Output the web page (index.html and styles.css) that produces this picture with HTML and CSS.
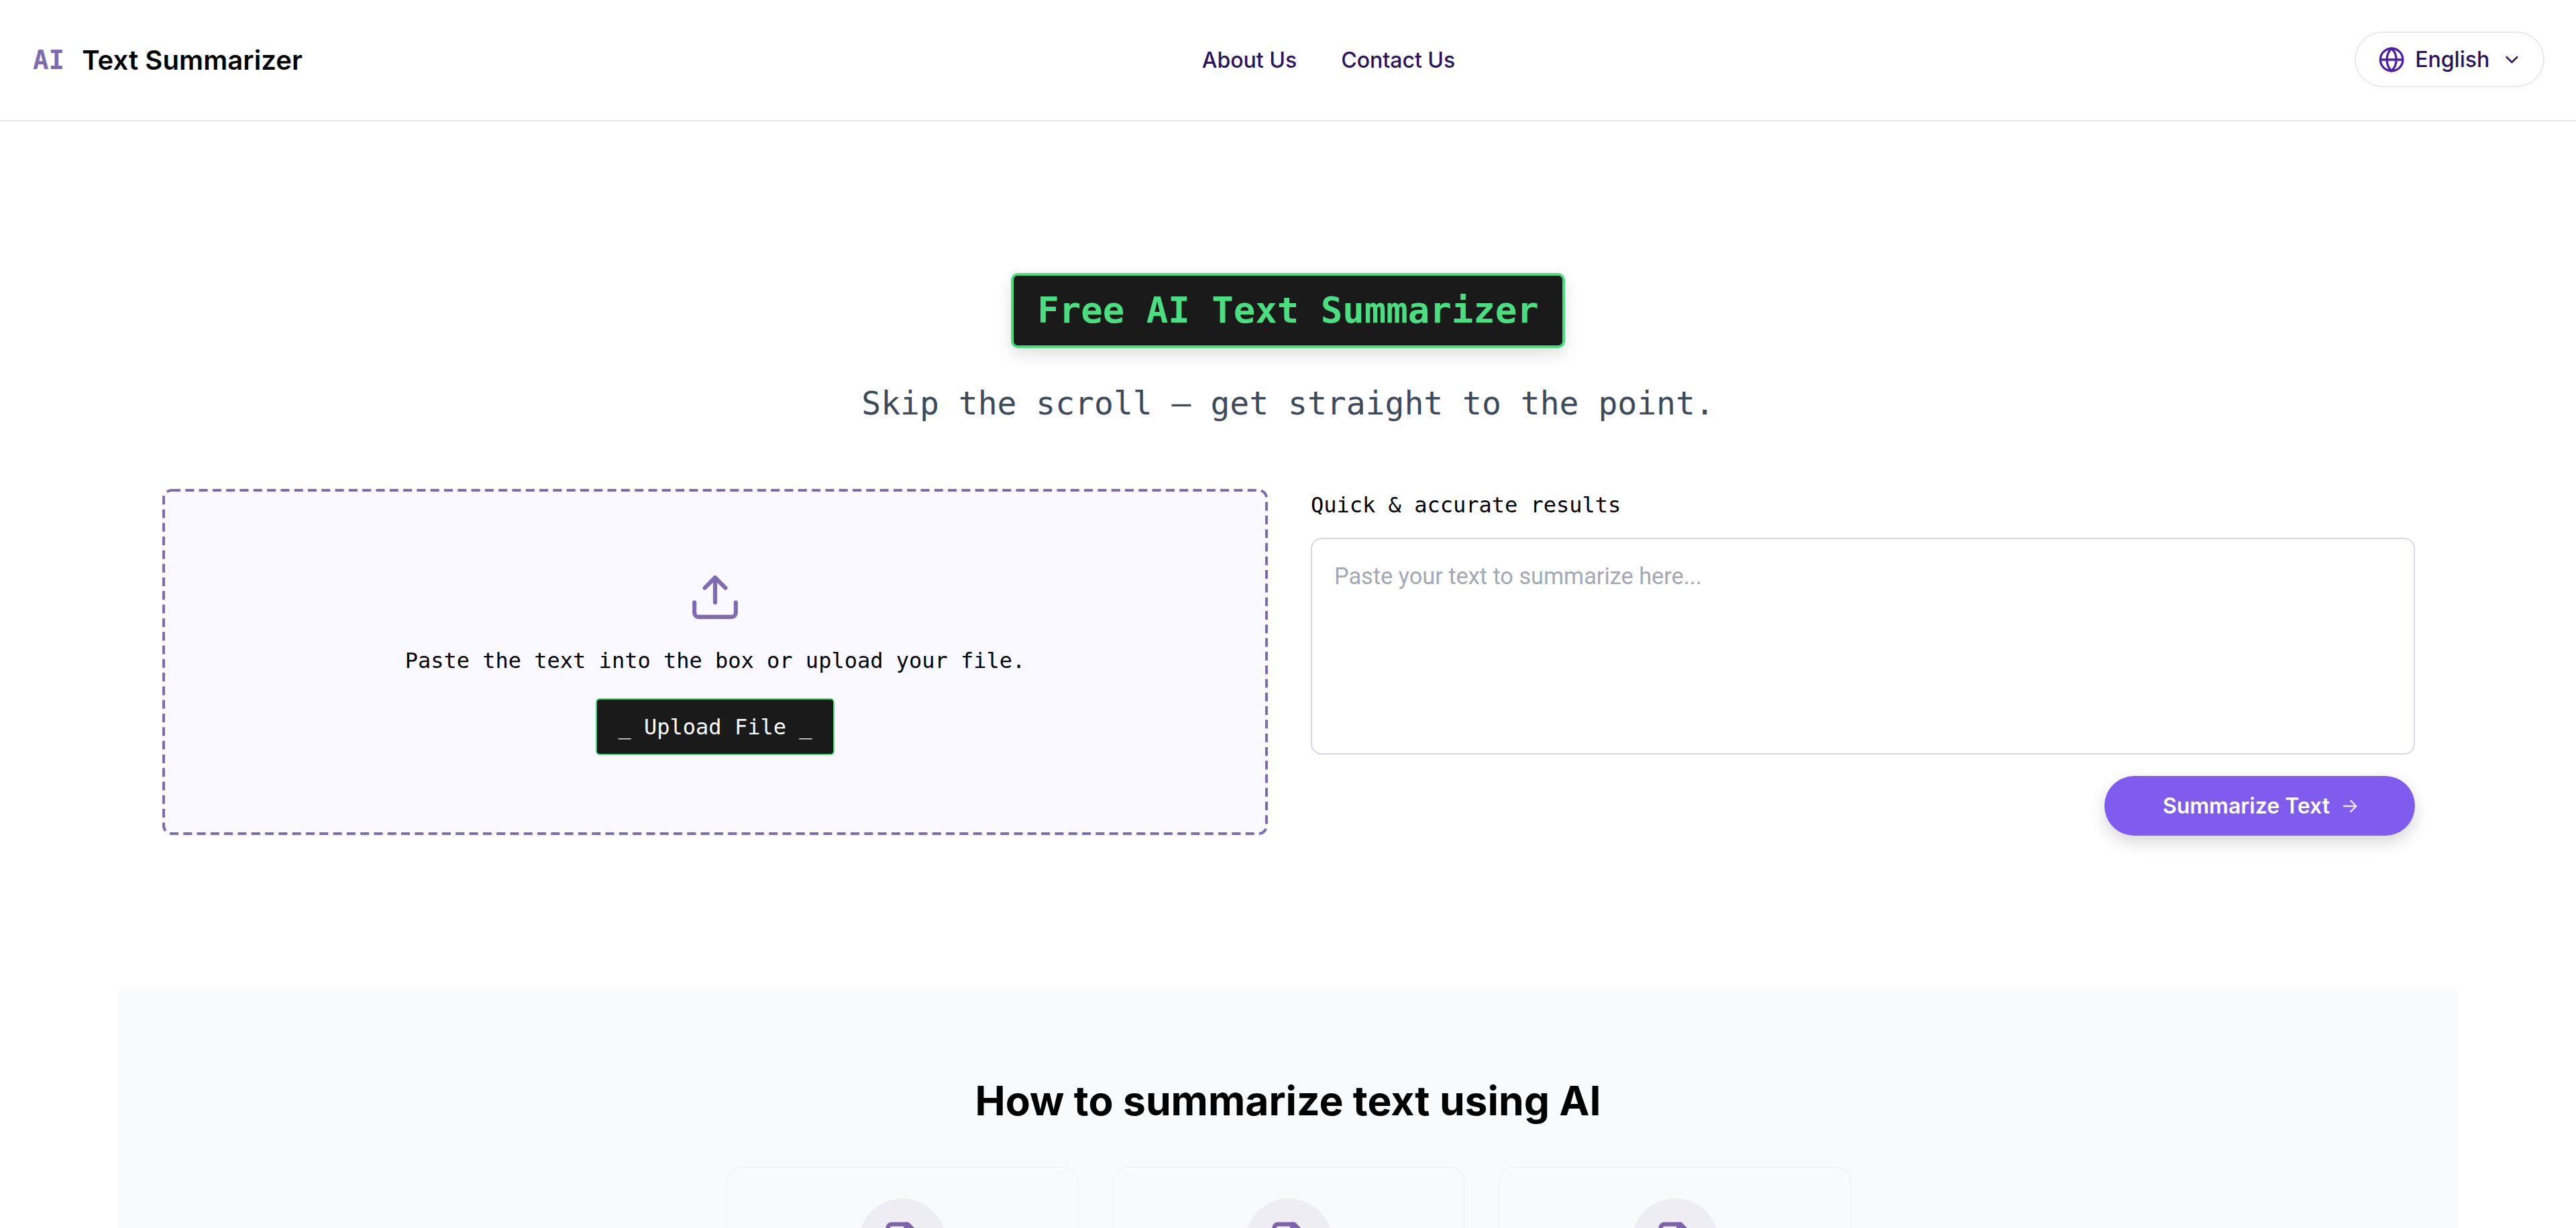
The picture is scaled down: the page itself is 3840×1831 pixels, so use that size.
FILE: index.html
```html
<!DOCTYPE html>
<html lang="en">
<head>
    <meta charset="UTF-8">
    <meta name="viewport" content="width=device-width, initial-scale=1.0">
    <title>AI Text Summarizer</title>
    <link rel="stylesheet" href="styles.css">
</head>
<body>

    <header class="site-header">
        <a class="logo" href="#"><span class="logo-mark">AI</span> <span>Text Summarizer</span></a>
        <nav class="main-nav">
            <a href="#">About Us</a>
            <a href="#">Contact Us</a>
        </nav>
        <button class="lang-select" type="button">
            <svg class="globe" viewBox="0 0 24 24" fill="none" stroke="currentColor" stroke-width="2">
                <circle cx="12" cy="12" r="10"/>
                <path d="M2 12h20"/>
                <path d="M12 2c2.8 2.7 4.2 6 4.2 10s-1.4 7.3-4.2 10c-2.800-2.700-4.200-6-4.200-10s1.400-7.300 4.200-10z"/>
            </svg>
            <span>English</span>
            <svg class="chevron" viewBox="0 0 24 24" fill="none" stroke="currentColor" stroke-width="2.4" stroke-linecap="round" stroke-linejoin="round">
                <path d="M5 8.500l7 7 7-7"/>
            </svg>
        </button>
    </header>

    <main>
        <section class="hero">
            <h1 class="hero-title">Free AI Text Summarizer</h1>
            <p class="hero-sub">Skip the scroll — get straight to the point.</p>

            <div class="tool-grid">
                <!-- Upload box -->
                <div class="drop-zone">
                    <svg class="drop-border" viewBox="0 0 1648 516" fill="none">
                        <rect x="2" y="2" width="1644" height="512" rx="12" stroke="#7f6bb0" stroke-width="4" stroke-dasharray="13 7.300"/>
                    </svg>
                    <svg class="upload-icon" viewBox="0 0 24 24" fill="none" stroke="currentColor" stroke-width="2" stroke-linecap="round" stroke-linejoin="round">
                        <path d="M12 15V3"/>
                        <path d="M7 8l5-5 5 5"/>
                        <path d="M2 15v5a2 2 0 0 0 2 2h16a2 2 0 0 0 2-2v-5"/>
                    </svg>
                    <p class="drop-text">Paste the text into the box or upload your file.</p>
                    <button class="upload-btn" type="button">_ Upload File _</button>
                </div>

                <!-- Text input -->
                <form class="text-form">
                    <label class="text-label" for="source-text">Quick &amp; accurate results</label>
                    <textarea id="source-text" class="text-input" placeholder="Paste your text to summarize here..."></textarea>
                    <button class="submit-btn" type="submit">
                        <span>Summarize Text</span>
                        <svg class="arrow" viewBox="0 0 24 24" fill="none" stroke="currentColor" stroke-width="2" stroke-linecap="round" stroke-linejoin="round">
                            <path d="M4 12h16"/>
                            <path d="M13 5l7 7-7 7"/>
                        </svg>
                    </button>
                </form>
            </div>
        </section>

        <section class="how-to">
            <h2>How to summarize text using AI</h2>
            <div class="steps">
                <div class="step-card">
                    <div class="step-icon">
                        <svg viewBox="0 0 24 24" fill="none" stroke="currentColor" stroke-width="2.400" stroke-linecap="round" stroke-linejoin="round">
                            <path d="M15 2H6a2 2 0 0 0-2 2v16a2 2 0 0 0 2 2h12a2 2 0 0 0 2-2V7z"/>
                            <path d="M14 2v4a2 2 0 0 0 2 2h4"/>
                        </svg>
                    </div>
                </div>
                <div class="step-card">
                    <div class="step-icon">
                        <svg viewBox="0 0 24 24" fill="none" stroke="currentColor" stroke-width="2.400" stroke-linecap="round" stroke-linejoin="round">
                            <path d="M15 2H6a2 2 0 0 0-2 2v16a2 2 0 0 0 2 2h12a2 2 0 0 0 2-2V7z"/>
                            <path d="M14 2v4a2 2 0 0 0 2 2h4"/>
                        </svg>
                    </div>
                </div>
                <div class="step-card">
                    <div class="step-icon">
                        <svg viewBox="0 0 24 24" fill="none" stroke="currentColor" stroke-width="2.400" stroke-linecap="round" stroke-linejoin="round">
                            <path d="M15 2H6a2 2 0 0 0-2 2v16a2 2 0 0 0 2 2h12a2 2 0 0 0 2-2V7z"/>
                            <path d="M14 2v4a2 2 0 0 0 2 2h4"/>
                        </svg>
                    </div>
                </div>
            </div>
        </section>
    </main>

</body>
</html>
```

FILE: styles.css
```css
/* General Styles */
* {
    box-sizing: border-box;
}

html,
body {
    height: 100%;
    overflow: hidden;
}

body {
    margin: 0;
    background: #fff;
    color: #000;
    font-family: Inter, sans-serif;
}

a {
    color: inherit;
    text-decoration: none;
}

/* Header */
.site-header {
    display: flex;
    justify-content: space-between;
    align-items: center;
    height: 181px;
    padding: 0 47px 0 49px;
    border-bottom: 2px solid #e9e8f0;
}

.logo {
    display: flex;
    align-items: center;
    gap: 26px;
    font-size: 40px;
    font-weight: 600;
    letter-spacing: 0.1px;
}

.logo-mark {
    color: #7f6bb0;
    font-family: "DejaVu Sans Mono", monospace;
    font-size: 39px;
    font-weight: 700;
}

.main-nav {
    display: flex;
    gap: 66px;
    color: #2a1260;
    font-size: 32px;
    font-weight: 500;
}

.lang-select {
    display: flex;
    align-items: center;
    width: 283px;
    height: 83px;
    margin-bottom: 2px;
    padding: 0 33px;
    border: 2px solid #e9e8f0;
    border-radius: 42px;
    background: #fff;
    color: #2a1260;
    font-family: inherit;
    font-size: 32px;
    font-weight: 500;
}

.globe {
    width: 42px;
    height: 42px;
    margin-right: 15px;
    color: #4c21a8;
}

.chevron {
    width: 28px;
    height: 28px;
    margin-left: 20px;
}

/* Hero */
.hero {
    display: flex;
    flex-direction: column;
    align-items: center;
    padding-top: 226px;
}

.hero-title {
    margin: 0;
    height: 112px;
    padding: 0 35px;
    border: 4px solid #4ade80;
    border-radius: 10px;
    background: #1a1a1a;
    box-shadow: 0 10px 24px rgba(0, 0, 0, 0.12);
    color: #4ade80;
    font-family: "DejaVu Sans Mono", monospace;
    font-size: 54px;
    font-weight: 700;
    line-height: 104px;
}

.hero-sub {
    margin: 52px 0 0;
    color: #3d4a5c;
    font-family: "DejaVu Sans Mono", monospace;
    font-size: 48px;
    line-height: 60px;
}

.tool-grid {
    display: grid;
    grid-template-columns: 1648px 1646px;
    gap: 64px;
    margin: 98px 0 0 2px;
}

/* Upload box */
.drop-zone {
    position: relative;
    display: flex;
    flex-direction: column;
    align-items: center;
    height: 516px;
    padding-top: 123px;
    border-radius: 12px;
    background: #faf9ff;
}

.drop-border {
    position: absolute;
    top: 0;
    left: 0;
    width: 100%;
    height: 100%;
}

.upload-icon {
    width: 74px;
    height: 74px;
    color: #7f6bb0;
}

.drop-text {
    margin: 37px 0 0;
    font-family: "DejaVu Sans Mono", monospace;
    font-size: 32px;
    line-height: 44px;
}

.upload-btn {
    height: 85px;
    margin-top: 34px;
    padding: 0 32px;
    border: 2px solid #4ade80;
    border-radius: 6px;
    background: #1a1a1a;
    color: #fff;
    font-family: "DejaVu Sans Mono", monospace;
    font-size: 32px;
}

/* Text form */
.text-form {
    display: flex;
    flex-direction: column;
    align-items: flex-end;
}

.text-label {
    align-self: flex-start;
    height: 73px;
    padding-top: 2px;
    font-family: "DejaVu Sans Mono", monospace;
    font-size: 32px;
    line-height: 44px;
}

.text-input {
    display: block;
    width: 100%;
    height: 323px;
    padding: 35px 33px;
    border: 2px solid #d9d5ec;
    border-radius: 16px;
    background: #fff;
    font-family: Roboto, sans-serif;
    font-size: 34.3px;
    line-height: 40px;
    resize: none;
}

.text-input::placeholder {
    color: #a3a8b4;
}

.submit-btn {
    display: flex;
    align-items: center;
    justify-content: center;
    gap: 16px;
    width: 463px;
    height: 89px;
    margin-top: 32px;
    padding-right: 2px;
    border: none;
    border-radius: 45px;
    background: #7f5bee;
    box-shadow: 0 10px 24px rgba(0, 0, 0, 0.16);
    color: #fff;
    font-family: inherit;
    font-size: 32px;
    font-weight: 600;
}

.arrow {
    width: 28px;
    height: 28px;
    opacity: 0.85;
}

/* How to section */
.how-to {
    width: 3488px;
    margin: 227px auto 0;
    padding-top: 130px;
    background: #f9fafb;
}

.how-to h2 {
    margin: 0;
    font-size: 60.6px;
    font-weight: 700;
    line-height: 76px;
    text-align: center;
}

.steps {
    display: grid;
    grid-template-columns: repeat(3, 526px);
    justify-content: center;
    gap: 50px;
    margin-top: 60px;
    padding-left: 2px;
}

.step-card {
    height: 500px;
    padding-top: 46px;
    border: 2px solid #f3f4f6;
    border-radius: 24px;
}

.step-icon {
    display: flex;
    align-items: center;
    justify-content: center;
    width: 130px;
    height: 130px;
    margin: 0 auto;
    border-radius: 50%;
    background: #eeedf3;
    color: #7d62ae;
}

.step-icon svg {
    width: 64px;
    height: 64px;
}
```
